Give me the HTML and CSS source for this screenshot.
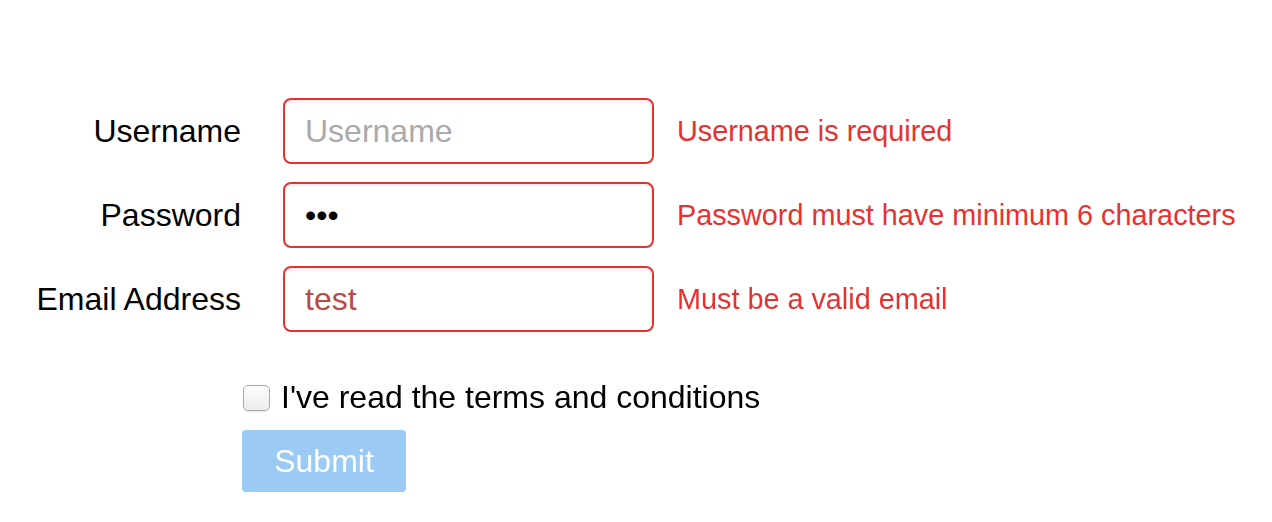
FILE: index.html
```html
<!DOCTYPE html>
<html lang="en">
<head>
    <meta charset="UTF-8">
    <meta name="viewport" content="width=device-width, initial-scale=1.0">
    <title>Sign Up</title>
    <link rel="stylesheet" href="styles.css">
</head>
<body>
    <form class="signup" novalidate>
        <!-- Text fields with validation messages -->
        <div class="row">
            <label class="field-label" for="username">Username</label>
            <input class="field has-error" type="text" id="username" placeholder="Username">
            <span class="error-msg">Username is required</span>
        </div>
        <div class="row">
            <label class="field-label" for="password">Password</label>
            <input class="field has-error" type="password" id="password" value="abc">
            <span class="error-msg">Password must have minimum 6 characters</span>
        </div>
        <div class="row">
            <label class="field-label" for="email">Email Address</label>
            <input class="field has-error email" type="text" id="email" value="test" autofocus>
            <span class="error-msg">Must be a valid email</span>
        </div>

        <!-- Terms and submit -->
        <div class="actions">
            <label class="terms">
                <input type="checkbox" class="check">
                I've read the terms and conditions
            </label>
            <button type="submit" class="submit" disabled>Submit</button>
        </div>
    </form>
</body>
</html>
```

FILE: styles.css
```css
body {
    font-family: 'Liberation Sans', Arial, sans-serif;
    background-color: #fff;
    color: #000;
    margin: 0;
    padding: 0;
}
.signup {
    padding-top: 98px;
}
.row {
    display: flex;
    align-items: center;
    height: 66px;
    margin-bottom: 18px;
}
.field-label {
    width: 241px;
    margin-right: 42px;
    text-align: right;
    font-size: 32px;
}
.field {
    box-sizing: border-box;
    width: 371px;
    height: 66px;
    padding: 0 20px;
    border: 2px solid #e8312f;
    border-radius: 8px;
    box-shadow: inset 0 2px 3px rgba(0, 0, 0, 0.08);
    font-family: inherit;
    font-size: 32px;
    color: #000;
    outline: none;
}
.field::placeholder {
    color: #aaa;
}
.field.email {
    color: #b94a48;
    caret-color: #b94a48;
}
.error-msg {
    margin-left: 23px;
    font-size: 28.8px;
    color: #e8312f;
}
.actions {
    padding-left: 242px;
    margin-top: 45px;
}
.terms {
    display: flex;
    align-items: center;
    height: 40px;
    font-size: 32px;
}
.check {
    -webkit-appearance: none;
    appearance: none;
    box-sizing: border-box;
    width: 27px;
    height: 26px;
    margin: 2px 11px 0 1px;
    border: 1px solid #a9a9a9;
    border-radius: 5px;
    background: linear-gradient(#fdfdfd, #ececec);
    box-shadow: 0 1px 1px rgba(0, 0, 0, 0.1);
}
.submit {
    display: block;
    margin-top: 13px;
    width: 164px;
    height: 62px;
    border: none;
    border-radius: 4px;
    background-color: #9bcbf5;
    color: #fff;
    font-family: inherit;
    font-size: 32px;
    padding: 0;
}
```
